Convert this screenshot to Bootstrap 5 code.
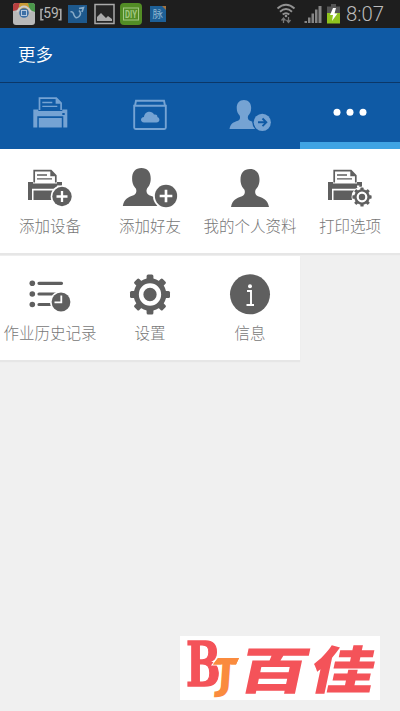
<!DOCTYPE html>
<html lang="zh-CN">
<head>
<meta charset="utf-8">
<meta name="viewport" content="width=device-width, initial-scale=1">
<title>更多</title>
<link href="https://cdn.jsdelivr.net/npm/bootstrap@5.3.0/dist/css/bootstrap.min.css" rel="stylesheet">
<style>
body{background:#f0f0f0;font-family:"Noto Sans CJK SC",sans-serif;height:711px;overflow:hidden}
svg{display:block;flex:none}
.status{height:28px;background:#1e1e1e}
.titlebar{height:55px;background:#0f5aa5;border-bottom:1px solid #0b3768;color:#fff;font-size:17.5px;font-weight:350;padding:0 18px 1px}
.tabs{height:66px;background:#0f5aa5;color:#75a3d3}
.tabs .active{color:#fff;box-shadow:inset 0 -7px #3fa3e4}
.tile{height:104px;background:#fff;color:#5f5f5f}
.tile span{font-size:15.5px;line-height:22px;font-weight:300;color:#777;white-space:nowrap;margin-top:-1px}
.tiles{row-gap:3px}
.tiles .row{box-shadow:0 2px 1px #e6e6e6}
.tiles .lower{width:300px}
.lower .tile{width:100px}
.brand{width:200px;height:64px;right:20px;bottom:11px;overflow:visible}
</style>
</head>
<body class="d-flex flex-column">
<svg width="0" height="0" class="position-absolute" aria-hidden="true">
<defs>
<g id="printer">
<path d="M6.2 13V1.2H23L27.8 6V13" fill="none" stroke="currentColor" stroke-width="1.7"/>
<path d="M22.3 1V6.7H28Z" fill="currentColor"/>
<path d="M9 5.500H19M9 9.300H24" stroke="currentColor" stroke-width="1.300"/>
<path fill="currentColor" fill-rule="evenodd" d="M0 12.500H5V14H29V12.500H34V30.500H30V19.300H4V30.500H0ZM29 16h2.400v2H29Z"/>
<path fill="currentColor" d="M5.500 21H28.500V30.500H5.500Z"/>
</g>
<path id="person" fill="currentColor" d="M19 0C25 0 28.500 4 28.500 10.500C28.500 16 26.500 18.500 24.700 20.500C23.500 23 24.200 26 27 27.200C33 29.500 36.500 30.500 38 38H0C1.500 30.500 5 29.500 11 27.200C13.800 26 14.500 23 13.300 20.500C11.500 18.500 9.500 16 9.500 10.500C9.500 4 13 0 19 0Z"/>
<g id="plus"><circle r="11.300" fill="#fff"/><circle r="9.700" fill="currentColor"/><path d="M-5.500 0H5.500M0-5.500V5.500" stroke="#fff" stroke-width="2.300"/></g>
<g id="teeth" fill="currentColor"><rect x="-3.400" y="-20" width="6.800" height="40" rx="1.500"/><rect x="-3.400" y="-20" width="6.800" height="40" rx="1.500" transform="rotate(45)"/><rect x="-3.400" y="-20" width="6.800" height="40" rx="1.500" transform="rotate(90)"/><rect x="-3.400" y="-20" width="6.800" height="40" rx="1.500" transform="rotate(135)"/><circle r="16.300"/></g>
</defs>
</svg>

<header>
<div class="status d-flex">
<svg width="400" height="28" viewBox="0 0 400 28" font-family="Roboto,sans-serif">
<rect x="13" y="3" width="22" height="22" rx="3" fill="#b9b9b9"/>
<path d="M13 11V6Q13 3 16 3H20L18 10Z" fill="#b94040"/><path d="M18 10L20 3H28L31 10Z" fill="#c99b35"/><path d="M28 3H32Q35 3 35 6V12L30 10Z" fill="#4b984b"/>
<path d="M17 12Q24 1 31 12" fill="none" stroke="#ccc" stroke-width="2"/>
<circle cx="24" cy="13" r="4.800" fill="#3c6fa5"/><rect x="21.500" y="10.500" width="5" height="5" fill="none" stroke="#b4c7dc"/>
<path d="M43 9.500H41V19.800H43.500M58.500 9.500H60.800V19.800H58.500" fill="none" stroke="#aaa" stroke-width="1.600"/>
<text x="43.300" y="17.800" font-size="14.500" textLength="15.500" lengthAdjust="spacingAndGlyphs" fill="#b5b5b5">59</text>
<rect x="68" y="5" width="19" height="18" fill="#1d588c"/><path d="M70.500 12Q73 11 74 15Q75.500 19.500 79 16.500Q82 13.500 79 10.500M79 8.500L83.500 7.500L82 12" fill="none" stroke="#87abc8" stroke-width="1.600"/>
<rect x="95" y="4.500" width="19" height="19" fill="#262626" stroke="#aaa" stroke-width="1.500"/><path d="M97 21V17L101 13L106 18L108 16L112 19V21Z" fill="#aaa"/>
<rect x="120" y="3" width="22" height="22" rx="4" fill="#528d25"/><rect x="123.500" y="8" width="15" height="12" fill="none" stroke="#a2c783"/><text x="125" y="17.800" font-size="10.500" textLength="12" lengthAdjust="spacingAndGlyphs" font-weight="bold" fill="#a2c783">DIY</text>
<rect x="150" y="6" width="16" height="16" fill="#1d5f96"/><path d="M162 6H166V10Z" fill="#a3723e"/><text x="152.500" y="18" font-size="10.500" font-family="Noto Sans CJK SC,sans-serif" fill="#8eb6d1">脉</text>
<g fill="none" stroke="#929292" stroke-width="1.900"><path d="M277.500 8.500Q286 1 294.500 8.500M280 11.700Q286 6.500 292 11.700M282.700 14.500Q286 11.800 289.300 14.500"/></g>
<circle cx="286" cy="16" r="1.300" fill="#929292"/>
<path d="M283.500 23V19M281.500 20.500L283.500 18L285.500 20.500M288.500 17V21.500M286.500 20L288.500 22.500L290.500 20" fill="none" stroke="#777" stroke-width="1.300"/>
<path d="M304.500 23V21H307V23ZM308 23V17.500H310.500V23ZM311.500 23V13.500H314V23ZM315 23V9.500H317.500V23ZM318.500 23V6H321.500V23Z" fill="#858585"/>
<path d="M331 4H336V6.500H340V14H327V6.500H331Z" fill="#555"/><path d="M327 13H340V23.500H327Z" fill="#8fc31e"/><path d="M333 8L330 15H333L332 21L337.500 13.500H334.500L336 8Z" fill="#fff"/>
<text x="346" y="20.500" font-size="19.500" font-weight="300" textLength="38" lengthAdjust="spacingAndGlyphs" fill="#bbb">8:07</text>
</svg>
</div>
<div class="titlebar d-flex align-items-center">更多</div>
<nav class="tabs row g-0">
<div class="col-3"><svg width="100" height="66"><use href="#printer" x="33.300" y="14"/></svg></div>
<div class="col-3"><svg width="100" height="66"><path d="M34.200 22.700V44.500Q34.200 46 35.700 46H64.300Q65.800 46 65.800 44.500V22.700ZM35 22.700L36 17.800H64L65 22.700" fill="none" stroke="currentColor" stroke-width="1.900"/><path d="M44 39.500C40 39 40 34.500 44 34C44.500 28 52 27 54 31.500C56.500 31 57.800 32.500 57.300 34C60.500 35 60 39.500 56.500 39.500Z" fill="currentColor"/></svg></div>
<div class="col-3"><svg width="100" height="66"><use href="#person" transform="translate(29.500 17) scale(.76)"/><circle cx="62.300" cy="39.300" r="10" fill="#0f5aa5"/><circle cx="62.300" cy="39.300" r="8.600" fill="currentColor"/><path d="M58 39.300H66M62.500 35.500L66.300 39.300L62.500 43.100" fill="none" stroke="#0f5aa5" stroke-width="1.900"/></svg></div>
<div class="col-3 active"><svg width="100" height="66" fill="currentColor"><circle cx="37" cy="29.300" r="3.500"/><circle cx="50" cy="29.300" r="3.500"/><circle cx="63" cy="29.300" r="3.500"/></svg></div>
</nav>
</header>

<main class="tiles d-flex flex-column">
<div class="row g-0">
<div class="col-3 tile d-flex flex-column align-items-center"><svg width="100" height="66"><use href="#printer" x="28" y="20.500"/><use href="#plus" x="62" y="47.500"/></svg><span>添加设备</span></div>
<div class="col-3 tile d-flex flex-column align-items-center"><svg width="100" height="66"><use href="#person" transform="translate(22.800 19) scale(.98 1)"/><use href="#plus" transform="translate(66 47) scale(1.150)"/></svg><span>添加好友</span></div>
<div class="col-3 tile d-flex flex-column align-items-center"><svg width="100" height="66"><use href="#person" x="31" y="20"/></svg><span>我的个人资料</span></div>
<div class="col-3 tile d-flex flex-column align-items-center"><svg width="100" height="66"><use href="#printer" x="28" y="20.500"/><circle cx="62" cy="48" r="10.500" fill="#fff"/><use href="#teeth" transform="translate(62 48) scale(.480)"/><circle cx="62" cy="48" r="4.300" fill="currentColor" stroke="#fff" stroke-width="2.200"/></svg><span>打印选项</span></div>
</div>
<div class="row g-0 lower">
<div class="col-auto tile d-flex flex-column align-items-center"><svg width="100" height="66"><g fill="currentColor"><circle cx="32.300" cy="27.300" r="2.800"/><circle cx="32.300" cy="38" r="2.800"/><circle cx="32.300" cy="48.500" r="2.800"/></g><path d="M39 27.300H61.500M39 38H57M39 48.500H51" stroke="currentColor" stroke-width="3.200" stroke-linecap="round"/><circle cx="61" cy="46" r="11" fill="#fff"/><circle cx="61" cy="46" r="9.400" fill="currentColor"/><path d="M61.300 39.500V46.300H54.500" fill="none" stroke="#fff" stroke-width="1.800"/></svg><span>作业历史记录</span></div>
<div class="col-auto tile d-flex flex-column align-items-center"><svg width="100" height="66"><use href="#teeth" x="50" y="38.500"/><circle cx="50" cy="38.500" r="8.900" fill="currentColor" stroke="#fff" stroke-width="4.500"/></svg><span>设置</span></div>
<div class="col-auto tile d-flex flex-column align-items-center"><svg width="100" height="66"><circle cx="50" cy="38.300" r="20" fill="currentColor"/><circle cx="50" cy="30.300" r="2" fill="#fff"/><path d="M47 35H51V49M46.500 49H54" fill="none" stroke="#fff" stroke-width="1.900"/></svg><span>信息</span></div>
</div>
</main>

<svg class="brand position-absolute" viewBox="0 0 200 64">
<rect width="200" height="64" fill="#fff"/>
<text transform="translate(6 50) scale(.660 1)" font-family="DejaVu Serif,serif" font-weight="700" font-size="62" fill="#f45359" stroke="#f45359" stroke-width="1.500">B</text>
<g fill="#fa8b3e"><path d="M38 22H59L56 28.500H33Z" stroke="#fff" stroke-width="2" paint-order="stroke"/><text transform="translate(37 53) skewX(-4)" font-family="DejaVu Sans,sans-serif" font-weight="700" font-size="41" stroke="#fff" stroke-width="2" paint-order="stroke">J</text><path d="M38 22H59L56 28.500H33Z"/></g>
<g font-family="Noto Sans CJK SC,sans-serif" font-weight="900" font-size="59" fill="#f45359"><text transform="translate(56 52.500) skewX(-12) scale(1.180 .850)">百</text><text transform="translate(128 52.500) skewX(-12) scale(1.080 .870)">佳</text></g>
</svg>
<script src="https://cdn.jsdelivr.net/npm/bootstrap@5.3.0/dist/js/bootstrap.bundle.min.js"></script>
</body>
</html>
